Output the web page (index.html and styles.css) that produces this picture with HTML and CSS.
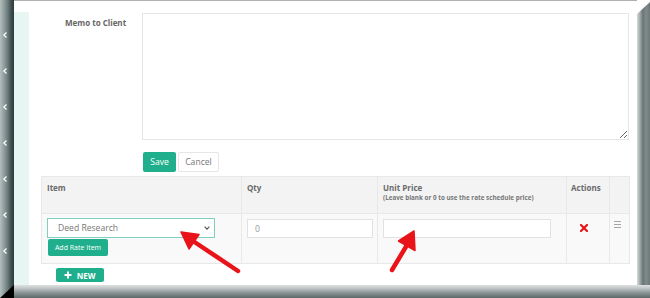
FILE: index.html
```html
<!DOCTYPE html>
<html>
<head>
<meta charset="utf-8">
<link rel="stylesheet" href="styles.css">
</head>
<body>
<div class="shot">
  <div class="edge-left">
    <svg class="chev" width="4" height="6" viewBox="0 0 4 6"><polyline points="3.5,0.5 0.8,3 3.5,5.5" fill="none" stroke="#fff" stroke-width="1.2"/></svg>
    <svg class="chev" width="4" height="6" viewBox="0 0 4 6"><polyline points="3.5,0.5 0.8,3 3.5,5.5" fill="none" stroke="#fff" stroke-width="1.2"/></svg>
    <svg class="chev" width="4" height="6" viewBox="0 0 4 6"><polyline points="3.5,0.5 0.8,3 3.5,5.5" fill="none" stroke="#fff" stroke-width="1.2"/></svg>
    <svg class="chev" width="4" height="6" viewBox="0 0 4 6"><polyline points="3.5,0.5 0.8,3 3.5,5.5" fill="none" stroke="#fff" stroke-width="1.2"/></svg>
    <svg class="chev" width="4" height="6" viewBox="0 0 4 6"><polyline points="3.5,0.5 0.8,3 3.5,5.5" fill="none" stroke="#fff" stroke-width="1.2"/></svg>
    <svg class="chev" width="4" height="6" viewBox="0 0 4 6"><polyline points="3.5,0.5 0.8,3 3.5,5.5" fill="none" stroke="#fff" stroke-width="1.2"/></svg>
    <svg class="chev" width="4" height="6" viewBox="0 0 4 6"><polyline points="3.5,0.5 0.8,3 3.5,5.5" fill="none" stroke="#fff" stroke-width="1.2"/></svg>
    <div class="corner-black"></div>
  </div>

  <div class="page">
    <div class="mint"></div>
    <div class="main">
      <div class="memo-row">
        <label class="memo-label">Memo to Client</label>
        <textarea class="memo-text"></textarea>
      </div>
      <div class="btn-row">
        <button class="btn btn-green btn-save">Save</button>
        <button class="btn btn-cancel">Cancel</button>
      </div>
      <table class="items">
        <colgroup>
          <col class="c-item"><col class="c-qty"><col class="c-price"><col class="c-act"><col class="c-last">
        </colgroup>
        <thead>
          <tr>
            <th>Item</th>
            <th>Qty</th>
            <th>Unit Price<div class="sub">(Leave blank or 0 to use the rate schedule price)</div></th>
            <th class="th-act">Actions</th>
            <th></th>
          </tr>
        </thead>
        <tbody>
          <tr>
            <td>
              <div class="fake-select"><span>Deed Research</span>
                <svg width="6" height="4" viewBox="0 0 6 4"><polyline points="0.6,0.6 3,3.2 5.4,0.6" fill="none" stroke="#555" stroke-width="1.1"/></svg>
              </div>
              <button class="btn btn-green btn-rate">Add Rate Item</button>
            </td>
            <td><input class="inp inp-qty" value="0"></td>
            <td><input class="inp inp-price" value=""></td>
            <td class="td-act">
              <svg width="8" height="8" viewBox="0 0 8 8"><path d="M1 1 L7 7 M7 1 L1 7" stroke="#e8141a" stroke-width="2.2" stroke-linecap="square"/></svg>
            </td>
            <td class="td-menu">
              <svg width="7" height="7" viewBox="0 0 7 7"><path d="M0 0.5 H7 M0 3.5 H7 M0 6.5 H7" stroke="#9a9a9a" stroke-width="0.9"/></svg>
            </td>
          </tr>
        </tbody>
      </table>
      <button class="btn btn-green btn-new">
        <svg width="8" height="8" viewBox="0 0 8 8"><path d="M4 0.5 V7.5 M0.5 4 H7.5" stroke="#fff" stroke-width="2"/></svg>
        <span>NEW</span>
      </button>
    </div>
    <svg class="arrows" width="623" height="285" viewBox="14 0 623 285">
      <g fill="#e8141a" stroke="#e8141a">
        <line x1="238" y1="271" x2="193" y2="241" stroke-width="4.5" stroke-linecap="round"/>
        <polygon points="181,232 199,234.5 189,249" stroke-width="1.5" stroke-linejoin="round"/>
        <line x1="392" y1="270" x2="407" y2="245" stroke-width="4.5" stroke-linecap="round"/>
        <polygon points="414,231 415,250.5 398.5,241" stroke-width="1.5" stroke-linejoin="round"/>
      </g>
    </svg>
  </div>

  <div class="edge-right"></div>
  <div class="edge-bottom"></div>
</div>
</body>
</html>
```

FILE: styles.css
```css
* { box-sizing: border-box; }

body {
  margin: 0;
  font-family: "Open Sans", "DejaVu Sans", sans-serif;
  background: #fff;
}

.shot {
  width: 650px;
  height: 298px;
  display: grid;
  grid-template-columns: 14px 623px 13px;
  grid-template-rows: 285px 13px;
  overflow: hidden;
}

/* frame edges */
.edge-left {
  grid-column: 1;
  grid-row: 1 / 3;
  position: relative;
  background: linear-gradient(to right, #b4bebe 0%, #95a2a2 25%, #6b7a7a 55%, #3f4e4e 80%, #2c3a3a 100%);
  display: flex;
  flex-direction: column;
  align-items: flex-start;
  padding: 32px 0 0 3px;
  gap: 30px;
}
.chev { display: block; position: relative; z-index: 2; }
.corner-black {
  position: absolute;
  left: 0;
  bottom: 0;
  width: 14px;
  height: 13px;
  background: #000;
  clip-path: polygon(100% 0, 100% 100%, 0 100%);
}

.edge-right {
  grid-column: 3;
  grid-row: 1;
  background: linear-gradient(to right, #d6dada 0%, #a9b1b1 20%, #6a7676 45%, #7f8a8a 70%, #6d7878 100%);
  clip-path: polygon(0 14px, 100% 2px, 100% 100%, 0 100%);
}

.edge-bottom {
  grid-column: 2 / 4;
  grid-row: 2;
  background: linear-gradient(to bottom, #dfe2e2 0%, #b9c0c0 30%, #8a9494 60%, #5c6767 100%);
}

/* page */
.page {
  grid-column: 2;
  grid-row: 1;
  position: relative;
  border-top: 1px solid #b0b0b0;
  display: grid;
  grid-template-columns: 15px 1fr;
  background: #fff;
}
.mint {
  margin-top: 11px;
  background: #e7f6f3;
}
.main {
  padding-top: 12px;
  display: flex;
  flex-direction: column;
  align-items: flex-start;
}

.memo-row {
  display: flex;
  align-items: flex-start;
}
.memo-label {
  width: 113px;
  padding: 4px 0 0 36px;
  font-size: 8px;
  line-height: 11px;
  font-weight: 700;
  color: #666;
}
.memo-text {
  width: 487px;
  height: 127px;
  border: 1px solid #e6e6e6;
  margin: 0;
  padding: 4px;
  font-family: inherit;
  resize: both;
  background: #fff;
}

.btn-row {
  margin-top: 12px;
  padding-left: 114px;
  display: flex;
  gap: 2px;
}
.btn {
  font-family: inherit;
  margin: 0;
  padding: 0;
  border: 0;
  display: flex;
  align-items: center;
  justify-content: center;
  cursor: pointer;
}
.btn-green {
  background: #1faf8c;
  color: #fff;
  border-radius: 2px;
}
.btn-save {
  width: 33px;
  height: 20px;
  font-size: 8.6px;
}
.btn-cancel {
  width: 41px;
  height: 20px;
  font-size: 8.6px;
  background: #fff;
  color: #777;
  border: 1px solid #e6e6e6;
  border-radius: 2px;
}

/* table */
.items {
  margin: 4px 0 0 12px;
  width: 588px;
  border-collapse: collapse;
  table-layout: fixed;
}
.c-item { width: 200px; }
.c-qty { width: 136px; }
.c-price { width: 189px; }
.c-act { width: 43px; }
.c-last { width: 20px; }

.items th, .items td {
  border: 1px solid #e8e8e8;
  vertical-align: top;
  text-align: left;
}
.items th {
  background: #f3f3f3;
  height: 37px;
  padding: 5px 5px 0 5px;
  font-size: 8px;
  line-height: 11px;
  font-weight: 700;
  color: #6a6a6a;
}
.items th .sub {
  font-size: 6.3px;
  line-height: 9px;
  color: #777;
  white-space: nowrap;
  margin-top: 0;
}
.items th.th-act { padding-left: 4px; }

.items td {
  background: #f9f9f9;
  height: 50px;
  padding: 4px 5px 0 5px;
}
.fake-select {
  width: 168px;
  height: 20px;
  border: 1px solid #80d0c0;
  background: #fff;
  display: flex;
  align-items: center;
  justify-content: space-between;
  padding: 0 4px 0 10px;
  font-size: 8.6px;
  color: #777;
}
.btn-rate {
  margin: 1px 0 0 1px;
  width: 60px;
  height: 17px;
  font-size: 7px;
  border-radius: 2px;
}
.inp {
  display: block;
  margin: 1px 0 0 0;
  height: 19px;
  border: 1px solid #e2e2e2;
  background: #fff;
  font-family: inherit;
  font-size: 8.6px;
  color: #999;
  padding: 0 0 0 7px;
  outline: none;
}
.inp-qty { width: 126px; }
.inp-price { width: 168px; }

.items td.td-act {
  text-align: left;
  padding: 10px 0 0 13px;
}
.td-act svg { display: block; }
.items td.td-menu {
  padding: 7px 0 0 4px;
}
.td-menu svg { display: block; }

.btn-new {
  margin: 4px 0 0 27px;
  width: 48px;
  height: 14px;
  gap: 5px;
  font-size: 8px;
  font-weight: 700;
  padding-right: 1px;
}
.btn-new svg { display: block; }

.arrows {
  position: absolute;
  left: 0;
  top: -1px;
  pointer-events: none;
}
```
